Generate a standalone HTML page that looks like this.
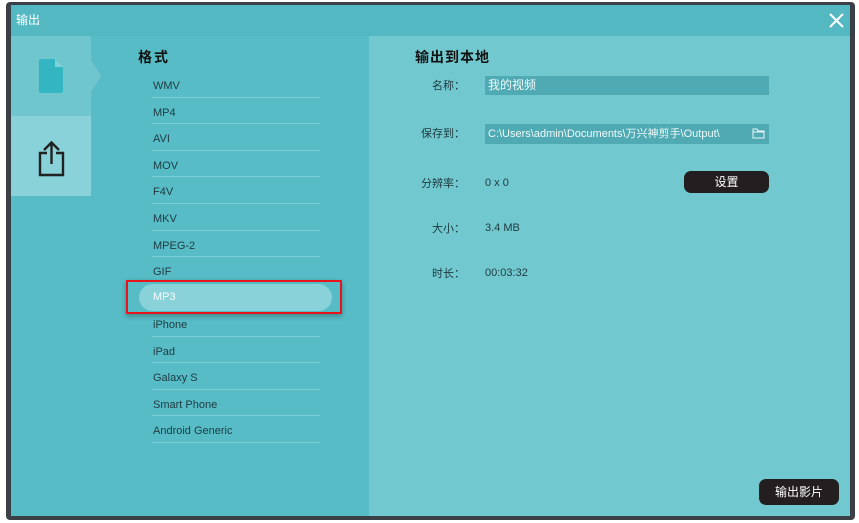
<!DOCTYPE html>
<html><head><meta charset="utf-8"><style>
*{margin:0;padding:0;box-sizing:border-box}
body{width:859px;height:523px;background:#fff;position:relative;overflow:hidden;font-family:"Liberation Sans","Noto Sans CJK SC",sans-serif}
.a{position:absolute}
.frame{left:6px;top:2px;width:849px;height:518px;background:#3a4046;border-radius:4px}
.title{left:11px;top:5px;width:839px;height:31px;background:#53b8c2;color:#fff;font-size:12px;line-height:31px;padding-left:5px}
.item{left:152px;width:168px;height:26.6px;border-bottom:1px solid #7ccdd4;font-size:11px;color:#1e3a40;line-height:30px;padding-left:1px}
.lbl{width:60px;text-align:right;font-size:11px;color:#1e3a40;left:405px}
.val{font-size:11px;color:#1e3a40;left:485px}
.inp{left:485px;width:284px;background:#4faab3;color:#f0fafa;font-size:11px;padding-left:3px}
.btn{background:#231f20;color:#fff;font-size:12px;text-align:center;border-radius:7px}
</style></head><body>
<div class="a frame"></div>
<div class="a title">输出</div>
<svg class="a" style="left:829px;top:13px" width="15" height="15"><path d="M1 1L14 14M14 1L1 14" stroke="#fff" stroke-width="2"/></svg>
<div class="a" style="left:11px;top:36px;width:80px;height:480px;background:#57bcc6"></div>
<div class="a" style="left:11px;top:36px;width:80px;height:80px;background:#70c6cf"></div>
<div class="a" style="left:11px;top:116px;width:80px;height:80px;background:#8ad2d9"></div>
<div class="a" style="left:91px;top:36px;width:278px;height:480px;background:#57bcc6"></div>
<svg class="a" style="left:91px;top:60px" width="12" height="32"><path d="M0 0L10 16L0 32Z" fill="#70c6cf"/></svg>
<svg class="a" style="left:38px;top:58px" width="26" height="36"><path d="M3 1H17L25 9V33Q25 35 23 35H3Q1 35 1 33V3Q1 1 3 1Z" fill="#33b5c2"/><path d="M17 1V9H25Z" fill="#7fd0d8"/></svg>
<svg class="a" style="left:38px;top:140px" width="27" height="37"><path d="M13.5 3V24M6 10L13.5 2.5L21 10" stroke="#222" stroke-width="2.4" fill="none"/><path d="M9 13H2V35H25V13H18" stroke="#222" stroke-width="2.4" fill="none"/></svg>
<div class="a" style="left:369px;top:36px;width:481px;height:480px;background:#72c8cf"></div>
<div class="a" style="left:138px;top:47px;font-size:14px;font-weight:bold;color:#111;letter-spacing:2px">格式</div>
<div class="a item" style="top:71px">WMV</div>
<div class="a item" style="top:97.6px">MP4</div>
<div class="a item" style="top:124.2px">AVI</div>
<div class="a item" style="top:150.8px">MOV</div>
<div class="a item" style="top:177.4px">F4V</div>
<div class="a item" style="top:204px">MKV</div>
<div class="a item" style="top:230.6px">MPEG-2</div>
<div class="a item" style="top:257.2px;border:none">GIF</div>
<div class="a" style="left:126px;top:280px;width:216px;height:34px;border:2px solid #e8141b;box-shadow:0 2px 5px rgba(0,0,0,.3)"></div>
<div class="a" style="left:139px;top:284px;width:193px;height:27px;background:#8ad2d9;border-radius:14px;color:#f4fbfb;font-size:11px;line-height:27px;padding-left:14px">MP3</div>
<div class="a item" style="top:310px">iPhone</div>
<div class="a item" style="top:336.6px">iPad</div>
<div class="a item" style="top:363.2px">Galaxy S</div>
<div class="a item" style="top:389.8px">Smart Phone</div>
<div class="a item" style="top:416.4px">Android Generic</div>
<div class="a" style="left:415px;top:47px;font-size:14px;font-weight:bold;color:#111;letter-spacing:1px">输出到本地</div>
<div class="a lbl" style="top:77px">名称：</div>
<div class="a inp" style="top:76px;height:19px;line-height:19px;font-size:12px">我的视频</div>
<div class="a lbl" style="top:125px">保存到：</div>
<div class="a inp" style="top:124px;height:20px;line-height:20px">C:\Users\admin\Documents\万兴神剪手\Output\</div>
<svg class="a" style="left:752px;top:128px" width="13" height="11"><path d="M1 1H5L6 3H12V10H1Z M1 4H12" stroke="#e8f6f7" fill="none"/></svg>
<div class="a lbl" style="top:175px">分辨率：</div>
<div class="a val" style="top:177px">0 x 0</div>
<div class="a btn" style="left:684px;top:171px;width:85px;height:22px;line-height:22px">设置</div>
<div class="a lbl" style="top:220px">大小：</div>
<div class="a val" style="top:222px">3.4 MB</div>
<div class="a lbl" style="top:265px">时长：</div>
<div class="a val" style="top:267px">00:03:32</div>
<div class="a btn" style="left:759px;top:479px;width:80px;height:26px;line-height:26px">输出影片</div>
</body></html>
